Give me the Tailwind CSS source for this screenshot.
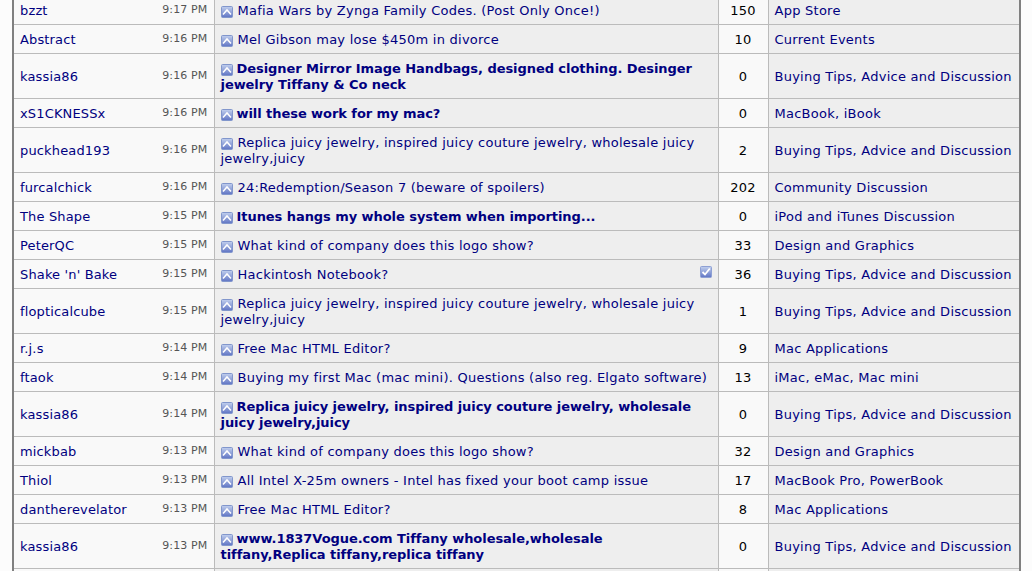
<!DOCTYPE html>
<html lang="en">
<head>
<meta charset="UTF-8">
<title>Latest threads</title>
<script src="https://cdn.jsdelivr.net/npm/@tailwindcss/browser@4"></script>
</head>
<body class="bg-[#fcfcfc] h-[571px] overflow-hidden font-['DejaVu_Sans',sans-serif] text-[13px] leading-4 tracking-[0.25px] text-[#000080]">
<svg class="absolute w-0 h-0">
  <defs>
    <linearGradient id="g" x1="0" y1="0" x2="0" y2="1"><stop offset="0" stop-color="#c2d0ee"/><stop offset="1" stop-color="#5f74c4"/></linearGradient>
    <symbol id="up" viewBox="0 0 12 12"><rect x="0.5" y="0.5" width="11" height="11" rx="1" fill="url(#g)" stroke="#8196cc"/><path d="M2 8.5 L6 4 L10 8.5" fill="none" stroke="#fff" stroke-width="1.5"/></symbol>
    <symbol id="check" viewBox="0 0 12 12"><rect x="0.5" y="0.5" width="11" height="11" rx="1" fill="url(#g)" stroke="#8ea0d4"/><path d="M2.5 6 L5 8.5 L9.8 2.5" fill="none" stroke="#fff" stroke-width="1.8"/></symbol>
  </defs>
</svg>
<div class="ml-3 w-[1009px] -mt-[5px] border-x-2 border-[#808080]">
<table class="w-[1005px] table-fixed border-collapse [&_td]:pt-0.5">
  <colgroup><col class="w-[200px]"><col class="w-[504px]"><col class="w-[50px]"><col class="w-[251px]"></colgroup>
  <tbody>
    <tr class="h-[29px]">
      <td class="border border-[#bbb] border-l-0 bg-[#f9f9f9] px-1.5"><div class="flex justify-between tracking-[0.15px]"><span>bzzt</span><span class="text-[11px] text-[#555] -mt-px">9:17 PM</span></div></td>
      <td class="border border-[#bbb] bg-[#eee] px-1.5"><svg class="inline w-3 h-3 mr-[5px] align-[-3px]"><use href="#up"/></svg>Mafia Wars by Zynga Family Codes. (Post Only Once!)</td>
      <td class="border border-[#bbb] bg-[#f9f9f9] text-center text-black">150</td>
      <td class="border border-[#bbb] border-r-0 bg-[#eee] px-1.5">App Store</td>
    </tr>
    <tr class="h-[29px]">
      <td class="border border-[#bbb] border-l-0 bg-[#f9f9f9] px-1.5"><div class="flex justify-between tracking-[0.15px]"><span>Abstract</span><span class="text-[11px] text-[#555] -mt-px">9:16 PM</span></div></td>
      <td class="border border-[#bbb] bg-[#eee] px-1.5"><svg class="inline w-3 h-3 mr-[5px] align-[-3px]"><use href="#up"/></svg>Mel Gibson may lose $450m in divorce</td>
      <td class="border border-[#bbb] bg-[#f9f9f9] text-center text-black">10</td>
      <td class="border border-[#bbb] border-r-0 bg-[#eee] px-1.5">Current Events</td>
    </tr>
    <tr class="h-[45px]">
      <td class="border border-[#bbb] border-l-0 bg-[#f9f9f9] px-1.5"><div class="flex justify-between tracking-[0.15px]"><span>kassia86</span><span class="text-[11px] text-[#555] -mt-px">9:16 PM</span></div></td>
      <td class="border border-[#bbb] bg-[#eee] px-1.5 font-bold tracking-[-0.06px]"><svg class="inline w-3 h-3 mr-1 align-[-3px]"><use href="#up"/></svg>Designer Mirror Image Handbags, designed clothing. Desinger jewelry Tiffany &amp; Co neck</td>
      <td class="border border-[#bbb] bg-[#f9f9f9] text-center text-black">0</td>
      <td class="border border-[#bbb] border-r-0 bg-[#eee] px-1.5">Buying Tips, Advice and Discussion</td>
    </tr>
    <tr class="h-[29px]">
      <td class="border border-[#bbb] border-l-0 bg-[#f9f9f9] px-1.5"><div class="flex justify-between tracking-[0.15px]"><span>xS1CKNESSx</span><span class="text-[11px] text-[#555] -mt-px">9:16 PM</span></div></td>
      <td class="border border-[#bbb] bg-[#eee] px-1.5 font-bold tracking-[-0.06px]"><svg class="inline w-3 h-3 mr-1 align-[-3px]"><use href="#up"/></svg>will these work for my mac?</td>
      <td class="border border-[#bbb] bg-[#f9f9f9] text-center text-black">0</td>
      <td class="border border-[#bbb] border-r-0 bg-[#eee] px-1.5">MacBook, iBook</td>
    </tr>
    <tr class="h-[45px]">
      <td class="border border-[#bbb] border-l-0 bg-[#f9f9f9] px-1.5"><div class="flex justify-between tracking-[0.15px]"><span>puckhead193</span><span class="text-[11px] text-[#555] -mt-px">9:16 PM</span></div></td>
      <td class="border border-[#bbb] bg-[#eee] px-1.5"><svg class="inline w-3 h-3 mr-[5px] align-[-3px]"><use href="#up"/></svg>Replica juicy jewelry, inspired juicy couture jewelry, wholesale juicy jewelry,juicy</td>
      <td class="border border-[#bbb] bg-[#f9f9f9] text-center text-black">2</td>
      <td class="border border-[#bbb] border-r-0 bg-[#eee] px-1.5">Buying Tips, Advice and Discussion</td>
    </tr>
    <tr class="h-[29px]">
      <td class="border border-[#bbb] border-l-0 bg-[#f9f9f9] px-1.5"><div class="flex justify-between tracking-[0.15px]"><span>furcalchick</span><span class="text-[11px] text-[#555] -mt-px">9:16 PM</span></div></td>
      <td class="border border-[#bbb] bg-[#eee] px-1.5"><svg class="inline w-3 h-3 mr-[5px] align-[-3px]"><use href="#up"/></svg>24:Redemption/Season 7 (beware of spoilers)</td>
      <td class="border border-[#bbb] bg-[#f9f9f9] text-center text-black">202</td>
      <td class="border border-[#bbb] border-r-0 bg-[#eee] px-1.5">Community Discussion</td>
    </tr>
    <tr class="h-[29px]">
      <td class="border border-[#bbb] border-l-0 bg-[#f9f9f9] px-1.5"><div class="flex justify-between tracking-[0.15px]"><span>The Shape</span><span class="text-[11px] text-[#555] -mt-px">9:15 PM</span></div></td>
      <td class="border border-[#bbb] bg-[#eee] px-1.5 font-bold tracking-[-0.06px]"><svg class="inline w-3 h-3 mr-1 align-[-3px]"><use href="#up"/></svg>Itunes hangs my whole system when importing...</td>
      <td class="border border-[#bbb] bg-[#f9f9f9] text-center text-black">0</td>
      <td class="border border-[#bbb] border-r-0 bg-[#eee] px-1.5">iPod and iTunes Discussion</td>
    </tr>
    <tr class="h-[29px]">
      <td class="border border-[#bbb] border-l-0 bg-[#f9f9f9] px-1.5"><div class="flex justify-between tracking-[0.15px]"><span>PeterQC</span><span class="text-[11px] text-[#555] -mt-px">9:15 PM</span></div></td>
      <td class="border border-[#bbb] bg-[#eee] px-1.5"><svg class="inline w-3 h-3 mr-[5px] align-[-3px]"><use href="#up"/></svg>What kind of company does this logo show?</td>
      <td class="border border-[#bbb] bg-[#f9f9f9] text-center text-black">33</td>
      <td class="border border-[#bbb] border-r-0 bg-[#eee] px-1.5">Design and Graphics</td>
    </tr>
    <tr class="h-[29px]">
      <td class="border border-[#bbb] border-l-0 bg-[#f9f9f9] px-1.5"><div class="flex justify-between tracking-[0.15px]"><span>Shake 'n' Bake</span><span class="text-[11px] text-[#555] -mt-px">9:15 PM</span></div></td>
      <td class="border border-[#bbb] bg-[#eee] px-1.5"><div class="flex justify-between items-center"><span><svg class="inline w-3 h-3 mr-[5px] align-[-3px]"><use href="#up"/></svg>Hackintosh Notebook?</span><svg class="w-3 h-3 -mt-1.5"><use href="#check"/></svg></div></td>
      <td class="border border-[#bbb] bg-[#f9f9f9] text-center text-black">36</td>
      <td class="border border-[#bbb] border-r-0 bg-[#eee] px-1.5">Buying Tips, Advice and Discussion</td>
    </tr>
    <tr class="h-[45px]">
      <td class="border border-[#bbb] border-l-0 bg-[#f9f9f9] px-1.5"><div class="flex justify-between tracking-[0.15px]"><span>flopticalcube</span><span class="text-[11px] text-[#555] -mt-px">9:15 PM</span></div></td>
      <td class="border border-[#bbb] bg-[#eee] px-1.5"><svg class="inline w-3 h-3 mr-[5px] align-[-3px]"><use href="#up"/></svg>Replica juicy jewelry, inspired juicy couture jewelry, wholesale juicy jewelry,juicy</td>
      <td class="border border-[#bbb] bg-[#f9f9f9] text-center text-black">1</td>
      <td class="border border-[#bbb] border-r-0 bg-[#eee] px-1.5">Buying Tips, Advice and Discussion</td>
    </tr>
    <tr class="h-[29px]">
      <td class="border border-[#bbb] border-l-0 bg-[#f9f9f9] px-1.5"><div class="flex justify-between tracking-[0.15px]"><span>r.j.s</span><span class="text-[11px] text-[#555] -mt-px">9:14 PM</span></div></td>
      <td class="border border-[#bbb] bg-[#eee] px-1.5"><svg class="inline w-3 h-3 mr-[5px] align-[-3px]"><use href="#up"/></svg>Free Mac HTML Editor?</td>
      <td class="border border-[#bbb] bg-[#f9f9f9] text-center text-black">9</td>
      <td class="border border-[#bbb] border-r-0 bg-[#eee] px-1.5">Mac Applications</td>
    </tr>
    <tr class="h-[29px]">
      <td class="border border-[#bbb] border-l-0 bg-[#f9f9f9] px-1.5"><div class="flex justify-between tracking-[0.15px]"><span>ftaok</span><span class="text-[11px] text-[#555] -mt-px">9:14 PM</span></div></td>
      <td class="border border-[#bbb] bg-[#eee] px-1.5"><svg class="inline w-3 h-3 mr-[5px] align-[-3px]"><use href="#up"/></svg>Buying my first Mac (mac mini). Questions (also reg. Elgato software)</td>
      <td class="border border-[#bbb] bg-[#f9f9f9] text-center text-black">13</td>
      <td class="border border-[#bbb] border-r-0 bg-[#eee] px-1.5">iMac, eMac, Mac mini</td>
    </tr>
    <tr class="h-[45px]">
      <td class="border border-[#bbb] border-l-0 bg-[#f9f9f9] px-1.5"><div class="flex justify-between tracking-[0.15px]"><span>kassia86</span><span class="text-[11px] text-[#555] -mt-px">9:14 PM</span></div></td>
      <td class="border border-[#bbb] bg-[#eee] px-1.5 font-bold tracking-[-0.06px]"><svg class="inline w-3 h-3 mr-1 align-[-3px]"><use href="#up"/></svg>Replica juicy jewelry, inspired juicy couture jewelry, wholesale juicy jewelry,juicy</td>
      <td class="border border-[#bbb] bg-[#f9f9f9] text-center text-black">0</td>
      <td class="border border-[#bbb] border-r-0 bg-[#eee] px-1.5">Buying Tips, Advice and Discussion</td>
    </tr>
    <tr class="h-[29px]">
      <td class="border border-[#bbb] border-l-0 bg-[#f9f9f9] px-1.5"><div class="flex justify-between tracking-[0.15px]"><span>mickbab</span><span class="text-[11px] text-[#555] -mt-px">9:13 PM</span></div></td>
      <td class="border border-[#bbb] bg-[#eee] px-1.5"><svg class="inline w-3 h-3 mr-[5px] align-[-3px]"><use href="#up"/></svg>What kind of company does this logo show?</td>
      <td class="border border-[#bbb] bg-[#f9f9f9] text-center text-black">32</td>
      <td class="border border-[#bbb] border-r-0 bg-[#eee] px-1.5">Design and Graphics</td>
    </tr>
    <tr class="h-[29px]">
      <td class="border border-[#bbb] border-l-0 bg-[#f9f9f9] px-1.5"><div class="flex justify-between tracking-[0.15px]"><span>Thiol</span><span class="text-[11px] text-[#555] -mt-px">9:13 PM</span></div></td>
      <td class="border border-[#bbb] bg-[#eee] px-1.5"><svg class="inline w-3 h-3 mr-[5px] align-[-3px]"><use href="#up"/></svg>All Intel X-25m owners - Intel has fixed your boot camp issue</td>
      <td class="border border-[#bbb] bg-[#f9f9f9] text-center text-black">17</td>
      <td class="border border-[#bbb] border-r-0 bg-[#eee] px-1.5">MacBook Pro, PowerBook</td>
    </tr>
    <tr class="h-[29px]">
      <td class="border border-[#bbb] border-l-0 bg-[#f9f9f9] px-1.5"><div class="flex justify-between tracking-[0.15px]"><span>dantherevelator</span><span class="text-[11px] text-[#555] -mt-px">9:13 PM</span></div></td>
      <td class="border border-[#bbb] bg-[#eee] px-1.5"><svg class="inline w-3 h-3 mr-[5px] align-[-3px]"><use href="#up"/></svg>Free Mac HTML Editor?</td>
      <td class="border border-[#bbb] bg-[#f9f9f9] text-center text-black">8</td>
      <td class="border border-[#bbb] border-r-0 bg-[#eee] px-1.5">Mac Applications</td>
    </tr>
    <tr class="h-[45px]">
      <td class="border border-[#bbb] border-l-0 bg-[#f9f9f9] px-1.5"><div class="flex justify-between tracking-[0.15px]"><span>kassia86</span><span class="text-[11px] text-[#555] -mt-px">9:13 PM</span></div></td>
      <td class="border border-[#bbb] bg-[#eee] px-1.5 font-bold tracking-[-0.06px]"><svg class="inline w-3 h-3 mr-1 align-[-3px]"><use href="#up"/></svg>www.1837Vogue.com Tiffany wholesale,wholesale<br>tiffany,Replica tiffany,replica tiffany</td>
      <td class="border border-[#bbb] bg-[#f9f9f9] text-center text-black">0</td>
      <td class="border border-[#bbb] border-r-0 bg-[#eee] px-1.5">Buying Tips, Advice and Discussion</td>
    </tr>
    <tr class="h-[29px]">
      <td class="border border-[#bbb] border-l-0 bg-[#f9f9f9]"></td>
      <td class="border border-[#bbb] bg-[#eee]"></td>
      <td class="border border-[#bbb] bg-[#f9f9f9]"></td>
      <td class="border border-[#bbb] border-r-0 bg-[#eee]"></td>
    </tr>
  </tbody>
</table>
</div>
</body>
</html>
